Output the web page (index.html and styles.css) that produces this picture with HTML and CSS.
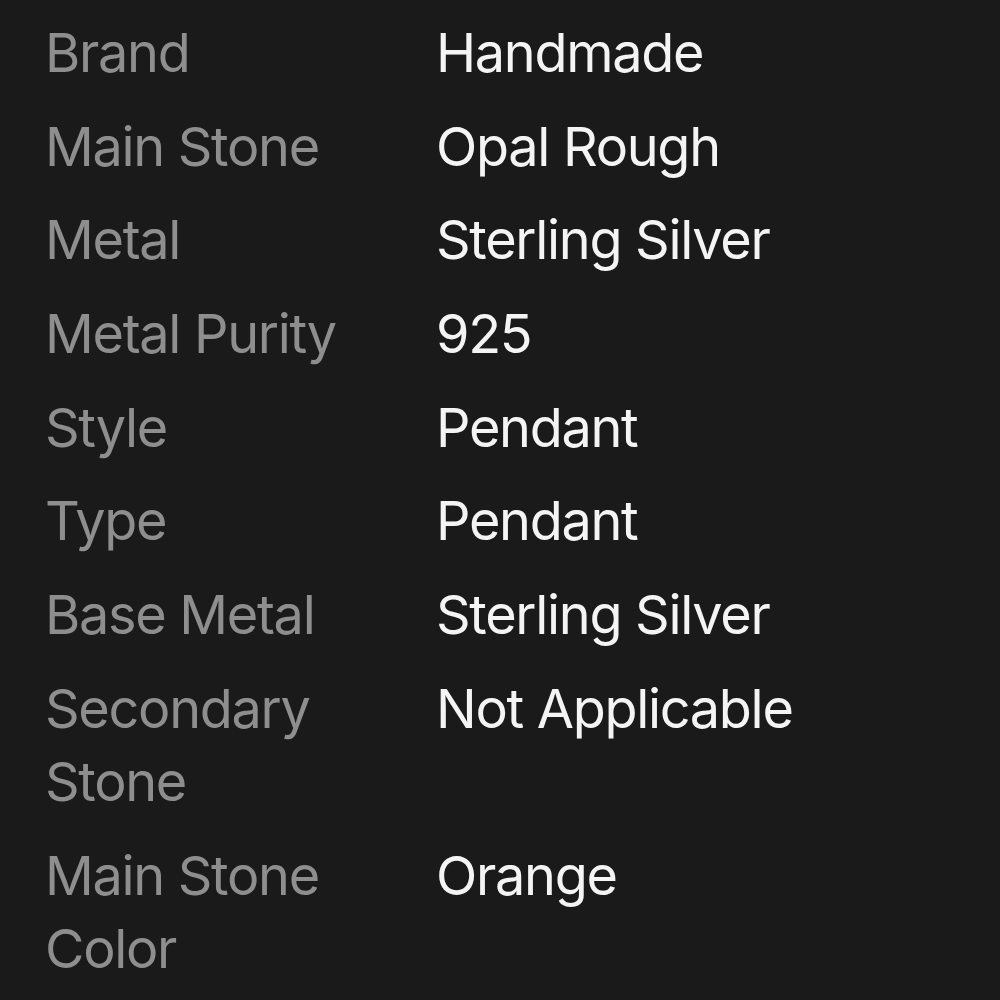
FILE: index.html
```html
<!DOCTYPE html>
<html lang="en">
<head>
<meta charset="utf-8">
<link rel="stylesheet" href="styles.css">
<title>Item specifics</title>
</head>
<body>
<dl class="specs">
  <div class="row"><dt>Brand</dt><dd>Handmade</dd></div>
  <div class="row"><dt>Main Stone</dt><dd>Opal Rough</dd></div>
  <div class="row"><dt>Metal</dt><dd>Sterling Silver</dd></div>
  <div class="row"><dt>Metal Purity</dt><dd>925</dd></div>
  <div class="row"><dt>Style</dt><dd>Pendant</dd></div>
  <div class="row"><dt>Type</dt><dd>Pendant</dd></div>
  <div class="row"><dt>Base Metal</dt><dd>Sterling Silver</dd></div>
  <div class="row"><dt>Secondary Stone</dt><dd>Not Applicable</dd></div>
  <div class="row"><dt>Main Stone Color</dt><dd>Orange</dd></div>
</dl>
</body>
</html>
```
FILE: styles.css
```css
html, body {
  margin: 0;
  padding: 0;
  background: #1a1a1a;
}
body {
  width: 1000px;
  height: 1000px;
  overflow: hidden;
  font-family: Inter, "Liberation Sans", sans-serif;
  font-size: 54px;
  line-height: 73px;
  letter-spacing: -1.3px;
}
.specs {
  margin: 0;
  padding: 16px 0 0 45px;
  display: flex;
  flex-direction: column;
  gap: 20.7px;
}
.row {
  display: grid;
  grid-template-columns: 391px 1fr;
}
dt {
  color: #8e8e8e;
  max-width: 330px;
}
dd {
  margin: 0;
  color: #f4f4f4;
}
```
